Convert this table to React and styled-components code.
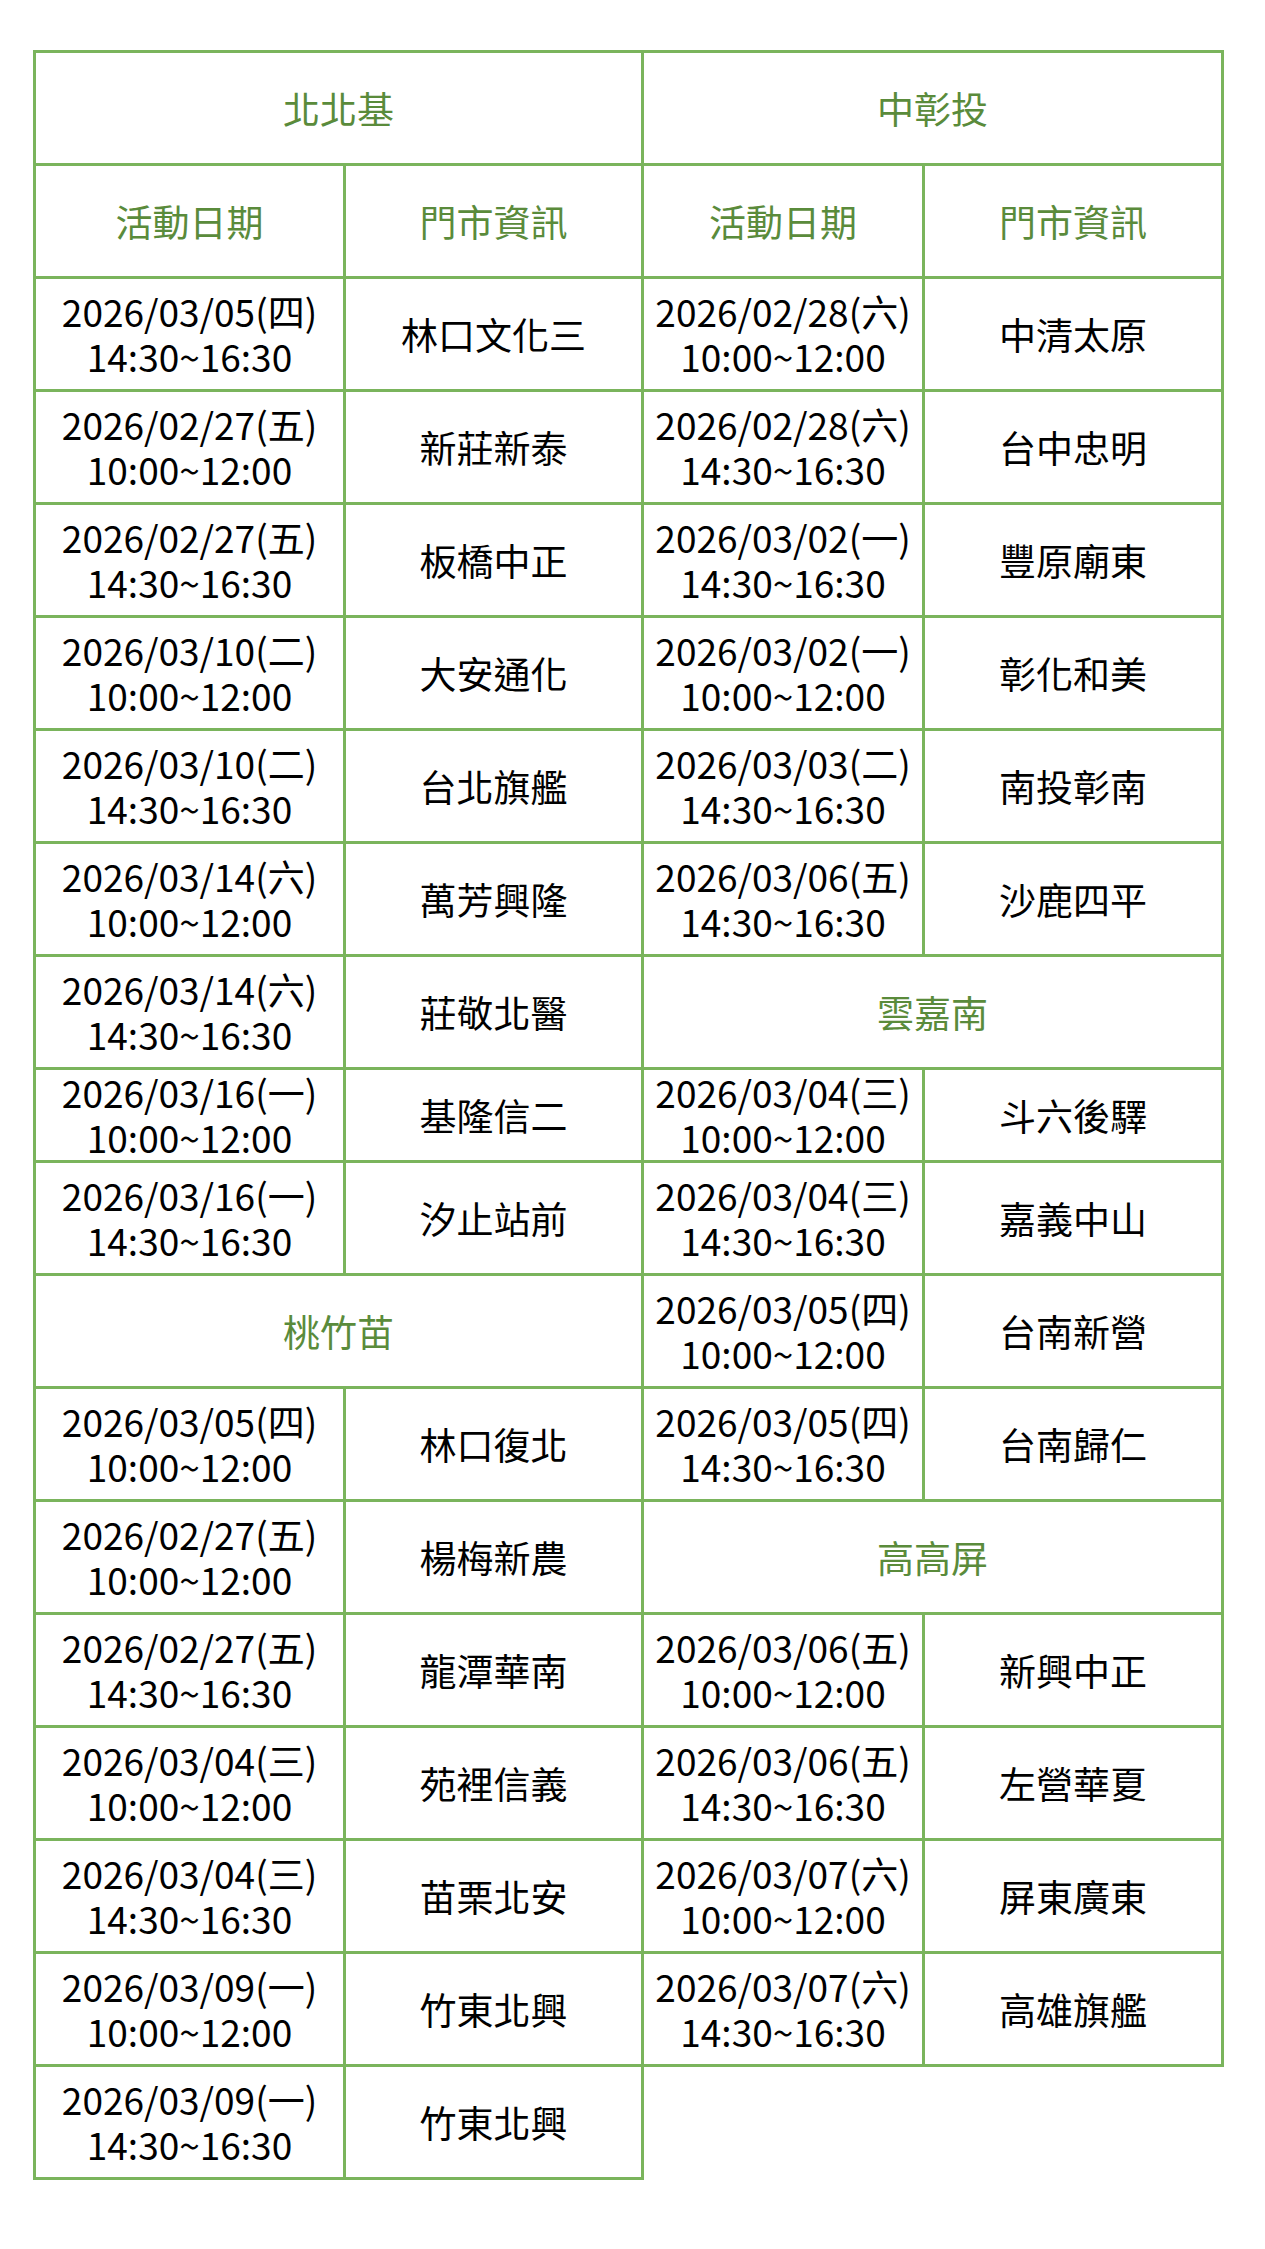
import React from "react";
import styled, { createGlobalStyle } from "styled-components";

const GlobalStyle = createGlobalStyle`
  html, body {
    margin: 0;
    padding: 0;
    background: #ffffff;
  }
  body {
    font-family: "Noto Sans CJK TC", "Noto Sans", sans-serif;
    color: #000000;
  }
`;

const LINE = "#7ab45c";
const GREEN = "#5a8b3b";

const Page = styled.div`
  padding: 50px 0 60px 33px;
  min-height: 2249px;
  box-sizing: border-box;
`;

const Grid = styled.div`
  display: grid;
  width: max-content;
  grid-template-columns: 310px 298px 281px 299px;
  grid-template-rows: ${({ $rows }) => $rows};
  border-top: 3px solid ${LINE};
  border-left: 3px solid ${LINE};
`;

const Cell = styled.div`
  box-sizing: border-box;
  border-right: 3px solid ${LINE};
  border-bottom: 3px solid ${LINE};
  display: flex;
  align-items: center;
  justify-content: center;
  text-align: center;
  font-size: 37px;
  line-height: 45px;
  font-weight: 400;
  color: #000000;
  white-space: nowrap;
  grid-column: span ${({ $span }) => $span || 1};
`;

const HeadCell = styled(Cell)`
  color: ${GREEN};
`;

const regions = [
  [
    { type: "region", label: "北北基" },
    { type: "head" },
    { d: "2026/03/05(四)", t: "14:30~16:30", s: "林口文化三" },
    { d: "2026/02/27(五)", t: "10:00~12:00", s: "新莊新泰" },
    { d: "2026/02/27(五)", t: "14:30~16:30", s: "板橋中正" },
    { d: "2026/03/10(二)", t: "10:00~12:00", s: "大安通化" },
    { d: "2026/03/10(二)", t: "14:30~16:30", s: "台北旗艦" },
    { d: "2026/03/14(六)", t: "10:00~12:00", s: "萬芳興隆" },
    { d: "2026/03/14(六)", t: "14:30~16:30", s: "莊敬北醫" },
    { d: "2026/03/16(一)", t: "10:00~12:00", s: "基隆信二" },
    { d: "2026/03/16(一)", t: "14:30~16:30", s: "汐止站前" },
    { type: "region", label: "桃竹苗" },
    { d: "2026/03/05(四)", t: "10:00~12:00", s: "林口復北" },
    { d: "2026/02/27(五)", t: "10:00~12:00", s: "楊梅新農" },
    { d: "2026/02/27(五)", t: "14:30~16:30", s: "龍潭華南" },
    { d: "2026/03/04(三)", t: "10:00~12:00", s: "苑裡信義" },
    { d: "2026/03/04(三)", t: "14:30~16:30", s: "苗栗北安" },
    { d: "2026/03/09(一)", t: "10:00~12:00", s: "竹東北興" },
    { d: "2026/03/09(一)", t: "14:30~16:30", s: "竹東北興" },
  ],
  [
    { type: "region", label: "中彰投" },
    { type: "head" },
    { d: "2026/02/28(六)", t: "10:00~12:00", s: "中清太原" },
    { d: "2026/02/28(六)", t: "14:30~16:30", s: "台中忠明" },
    { d: "2026/03/02(一)", t: "14:30~16:30", s: "豐原廟東" },
    { d: "2026/03/02(一)", t: "10:00~12:00", s: "彰化和美" },
    { d: "2026/03/03(二)", t: "14:30~16:30", s: "南投彰南" },
    { d: "2026/03/06(五)", t: "14:30~16:30", s: "沙鹿四平" },
    { type: "region", label: "雲嘉南" },
    { d: "2026/03/04(三)", t: "10:00~12:00", s: "斗六後驛" },
    { d: "2026/03/04(三)", t: "14:30~16:30", s: "嘉義中山" },
    { d: "2026/03/05(四)", t: "10:00~12:00", s: "台南新營" },
    { d: "2026/03/05(四)", t: "14:30~16:30", s: "台南歸仁" },
    { type: "region", label: "高高屏" },
    { d: "2026/03/06(五)", t: "10:00~12:00", s: "新興中正" },
    { d: "2026/03/06(五)", t: "14:30~16:30", s: "左營華夏" },
    { d: "2026/03/07(六)", t: "10:00~12:00", s: "屏東廣東" },
    { d: "2026/03/07(六)", t: "14:30~16:30", s: "高雄旗艦" },
  ],
];

const ROW_COUNT = 19;
const SHORT_ROW = 9;
const rowTemplate = Array.from({ length: ROW_COUNT }, (_, i) =>
  i === SHORT_ROW ? "93px" : "113px"
).join(" ");

function renderPart(item, key) {
  if (!item) return null;
  if (item.type === "region") {
    return [
      <HeadCell key={key} $span={2}>
        {item.label}
      </HeadCell>,
    ];
  }
  if (item.type === "head") {
    return [
      <HeadCell key={key + "a"}>活動日期</HeadCell>,
      <HeadCell key={key + "b"}>門市資訊</HeadCell>,
    ];
  }
  return [
    <Cell key={key + "a"}>
      <span>
        {item.d}
        <br />
        {item.t}
      </span>
    </Cell>,
    <Cell key={key + "b"}>{item.s}</Cell>,
  ];
}

export default function App() {
  const cells = [];
  for (let r = 0; r < ROW_COUNT; r++) {
    const left = renderPart(regions[0][r], `l${r}`);
    const right = renderPart(regions[1][r], `r${r}`);
    if (left) cells.push(...left);
    if (right) cells.push(...right);
  }
  return (
    <>
      <GlobalStyle />
      <Page>
        <Grid $rows={rowTemplate}>{cells}</Grid>
      </Page>
    </>
  );
}
